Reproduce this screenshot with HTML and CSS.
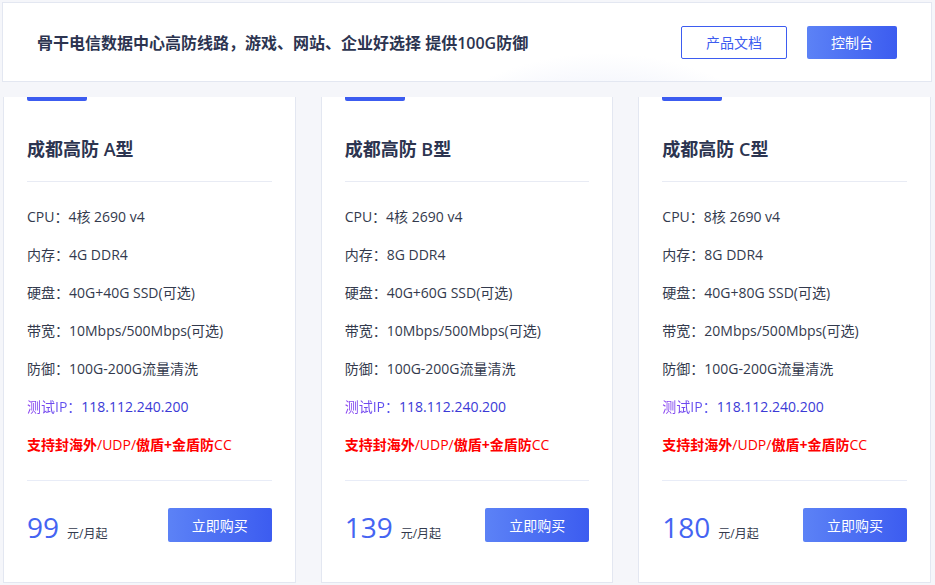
FILE: index.html
```html
<!DOCTYPE html>
<html lang="zh-CN">
<head>
  <meta charset="UTF-8">
  <meta name="viewport" content="width=device-width, initial-scale=1.0">
  <title>成都高防</title>
  <link rel="stylesheet" href="styles.css">
</head>
<body>

<header class="banner">
  <h2>骨干电信数据中心高防线路，游戏、网站、企业好选择 提供<span class="num">100G</span>防御</h2>
  <div class="banner-actions">
    <a class="btn btn-outline" href="#">产品文档</a>
    <a class="btn btn-solid" href="#">控制台</a>
  </div>
</header>

<section class="plans">

  <div class="plan">
    <span class="plan-bar"></span>
    <h3>成都高防 <span class="num">A</span>型</h3>
    <ul class="specs">
      <li>CPU：4核 2690 v4</li>
      <li>内存：4G DDR4</li>
      <li>硬盘：40G+40G SSD(可选)</li>
      <li>带宽：10Mbps/500Mbps(可选)</li>
      <li>防御：100G-200G流量清洗</li>
      <li><span class="ip-label">测试IP：</span><span class="ip">118.112.240.200</span></li>
      <li class="notice"><b>支持封海外</b>/UDP/<b>傲盾+金盾防</b>CC</li>
    </ul>
    <div class="plan-foot">
      <div class="price"><strong>99</strong><span>元/月起</span></div>
      <a class="btn btn-solid btn-buy" href="#">立即购买</a>
    </div>
  </div>

  <div class="plan">
    <span class="plan-bar"></span>
    <h3>成都高防 <span class="num">B</span>型</h3>
    <ul class="specs">
      <li>CPU：4核 2690 v4</li>
      <li>内存：8G DDR4</li>
      <li>硬盘：40G+60G SSD(可选)</li>
      <li>带宽：10Mbps/500Mbps(可选)</li>
      <li>防御：100G-200G流量清洗</li>
      <li><span class="ip-label">测试IP：</span><span class="ip">118.112.240.200</span></li>
      <li class="notice"><b>支持封海外</b>/UDP/<b>傲盾+金盾防</b>CC</li>
    </ul>
    <div class="plan-foot">
      <div class="price"><strong>139</strong><span>元/月起</span></div>
      <a class="btn btn-solid btn-buy" href="#">立即购买</a>
    </div>
  </div>

  <div class="plan">
    <span class="plan-bar"></span>
    <h3>成都高防 <span class="num">C</span>型</h3>
    <ul class="specs">
      <li>CPU：8核 2690 v4</li>
      <li>内存：8G DDR4</li>
      <li>硬盘：40G+80G SSD(可选)</li>
      <li>带宽：20Mbps/500Mbps(可选)</li>
      <li>防御：100G-200G流量清洗</li>
      <li><span class="ip-label">测试IP：</span><span class="ip">118.112.240.200</span></li>
      <li class="notice"><b>支持封海外</b>/UDP/<b>傲盾+金盾防</b>CC</li>
    </ul>
    <div class="plan-foot">
      <div class="price"><strong>180</strong><span>元/月起</span></div>
      <a class="btn btn-solid btn-buy" href="#">立即购买</a>
    </div>
  </div>

</section>

</body>
</html>
```

FILE: styles.css
```css
body {
  font-family: "Open Sans", "Noto Sans CJK SC", sans-serif;
  background-color: #f5f6fa;
  color: #333a4d;
  margin: 0;
  height: 585px;
  overflow: hidden;
}

.banner {
  margin: 2px 3px 0 2px;
  height: 78px;
  border: 1px solid #e3e7f1;
  background-color: #fff;
  background-image: radial-gradient(ellipse 240px 200px at 600px 250px, #edf0fb 0, #f3f5fc 80%, rgba(255, 255, 255, 0) 100%);
  display: flex;
  align-items: center;
  justify-content: space-between;
  padding: 0 34px 0 34px;
}

.banner h2 {
  margin: 0;
  font-size: 16px;
  font-weight: bold;
  color: #2c3450;
}

.num {
  font-weight: 600;
}

.banner-actions {
  display: flex;
  gap: 20px;
}

.btn {
  display: inline-flex;
  align-items: center;
  justify-content: center;
  height: 33px;
  border-radius: 2px;
  font-size: 14px;
  text-decoration: none;
  box-sizing: border-box;
}

.btn-outline {
  width: 106px;
  border: 1px solid #3d5cf0;
  color: #3d5cf0;
  background: #fff;
}

.btn-solid {
  width: 90px;
  color: #fff;
  background: linear-gradient(90deg, #5c82f6, #3c5cf0);
}

.plans {
  display: grid;
  grid-template-columns: repeat(3, 1fr);
  gap: 25px;
  padding: 15px 4px 0 3px;
}

.plan {
  background: #fff;
  border: 1px solid #e3e7f1;
  border-top: none;
  padding: 0 23px 40px 23px;
  height: 486px;
  box-sizing: border-box;
}

.plan-bar {
  display: block;
  width: 60px;
  height: 4px;
  background: #3c5cf0;
  border-radius: 0 0 2px 2px;
}

.plan h3 {
  margin: 36px 0 0 0;
  padding-bottom: 20px;
  border-bottom: 1px solid #e8ebf4;
  font-size: 18px;
  line-height: 24px;
  font-weight: bold;
  color: #2c3450;
}

.specs {
  list-style: none;
  margin: 0;
  padding: 16px 0 16px 0;
  border-bottom: 1px solid #e8ecf7;
}

.specs li {
  font-size: 14px;
  line-height: 38px;
  white-space: nowrap;
}

.ip-label {
  background: linear-gradient(90deg, #8a3ff0, #4a55ee);
  -webkit-background-clip: text;
  background-clip: text;
  color: transparent;
}

.ip {
  color: #3b3ad6;
}

.notice {
  color: #ff0000;
}

.notice b {
  font-weight: bold;
}

.plan-foot {
  display: flex;
  align-items: center;
  justify-content: space-between;
  padding-top: 25px;
}

.price {
  display: flex;
  align-items: baseline;
  gap: 8px;
  padding-top: 4px;
}

.price strong {
  font-size: 28px;
  font-weight: normal;
  color: #4564f2;
  line-height: 34px;
}

.price span {
  font-size: 12px;
  color: #333a4d;
}

.btn-buy {
  width: 104px;
  height: 34px;
}
```
